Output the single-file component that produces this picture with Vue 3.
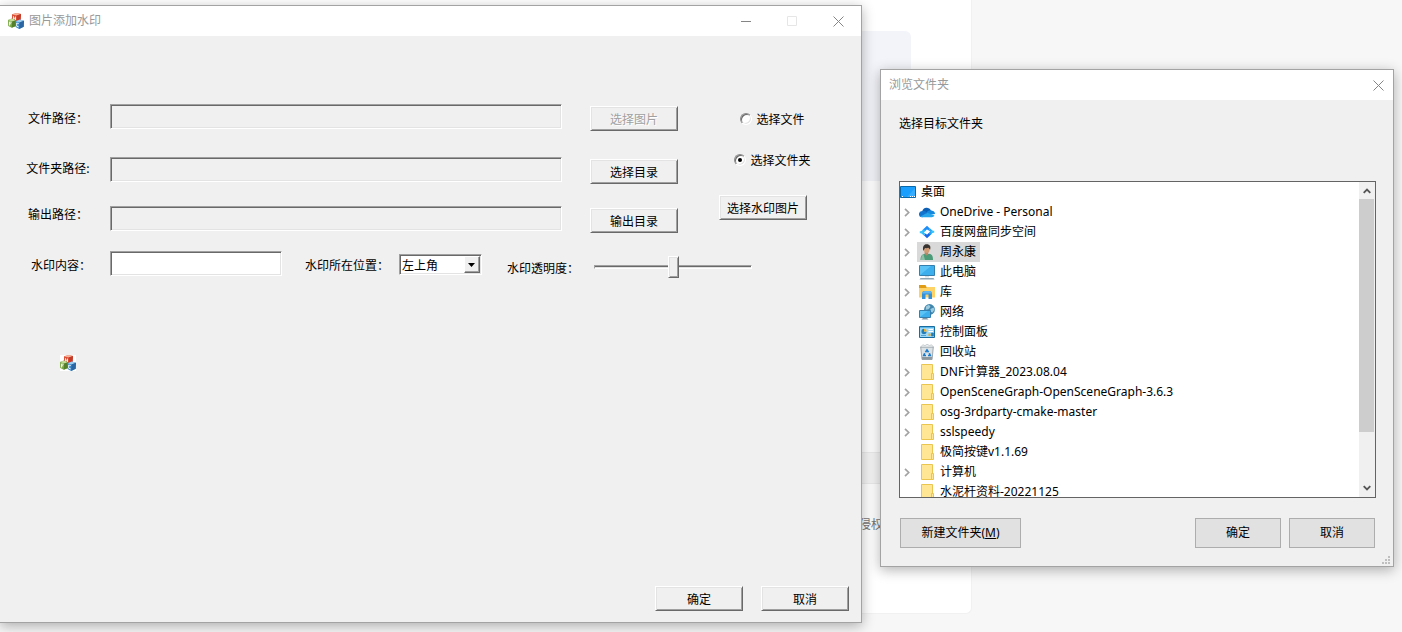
<script setup>
import { ref } from 'vue'

const filePath = ref('')
const folderPath = ref('')
const outputPath = ref('')
const content = ref('')
const mode = ref('folder')
const position = ref('左上角')
const opacity = ref(50)
const selected = ref('周永康')

const nodes = [
  { name: 'OneDrive - Personal', icon: 'cloud', open: true },
  { name: '百度网盘同步空间', icon: 'sync', open: true },
  { name: '周永康', icon: 'user', open: true },
  { name: '此电脑', icon: 'pc', open: true },
  { name: '库', icon: 'library', open: true },
  { name: '网络', icon: 'network', open: true },
  { name: '控制面板', icon: 'panel', open: true },
  { name: '回收站', icon: 'bin', open: false },
  { name: 'DNF计算器_2023.08.04', icon: 'folder', open: true },
  { name: 'OpenSceneGraph-OpenSceneGraph-3.6.3', icon: 'folder', open: true },
  { name: 'osg-3rdparty-cmake-master', icon: 'folder', open: true },
  { name: 'sslspeedy', icon: 'folder', open: true },
  { name: '极简按键v1.1.69', icon: 'folder', open: false },
  { name: '计算机', icon: 'folder', open: true },
  { name: '水泥杆资料-20221125', icon: 'folder', open: false }
]
</script>

<template>
  <div class="desktop">
    <svg class="defs" width="0" height="0" aria-hidden="true">
      <symbol id="mfc" viewBox="0 0 16 16">
        <path d="M4 1.300 9 0l4 1-.5 6.800-3.700 1.200L4 7.800z" fill="#dc5138" />
        <path d="M4 1.300 9 0l4 1-4.300 1.500z" fill="#f6b49c" />
        <path d="M8.700 2.500 13 1l-.5 6.800-3.700 1.200z" fill="#c23a28" />
        <path d="M5.500 3.200v3.600M7.500 3.600v3.600M5.500 5l2 .4" stroke="#fdeee9" stroke-width="1" fill="none" />
        <path d="M0 7 3.800 5.500 8 7.200l-.1 5.800-4.200 1.700L.2 13z" fill="#7dab48" />
        <path d="M0 7 3.800 5.500 8 7.200 4.100 8.500z" fill="#c3dc98" />
        <path d="M4.100 8.500 8 7.200l-.1 5.800-4.200 1.700z" fill="#54802b" />
        <path d="M1.500 12.500V8.900l2 .5M1.500 10.600l1.600.3" stroke="#f4f9ea" fill="none" />
        <path d="M7.500 8.200 12 6.600l4 1.200-.3 6-4.600 2.200-3.500-1.900z" fill="#3d8acb" />
        <path d="M7.500 8.200 12 6.600l4 1.200-4.500 1.600z" fill="#9dcdee" />
        <path d="M11.500 9.400 16 7.800l-.3 6-4.600 2.200z" fill="#2966a3" />
        <path d="M10.700 10.500l-2-.5v3.200l2 .7" stroke="#edf6fd" fill="none" />
      </symbol>
      <symbol id="close" viewBox="0 0 11 11">
        <path d="M.5.5l10 10M10.500.5l-10 10" stroke="#858585" fill="none" />
      </symbol>
      <symbol id="desk" viewBox="0 0 16 16">
        <path d="M.5 2.500h15v11H.5z" fill="#1a9fff" stroke="#0a68a8" />
        <path d="M7 13 15 4v9z" fill="#36adff" />
        <path d="M2 12.500h1M10 12.500h1M12 12.500h1M14 12.500h1" stroke="#fff" />
      </symbol>
      <symbol id="cloud" viewBox="0 0 16 16">
        <path d="M3.300 7.200A4.700 4.700 0 0 1 12 6.200L8 10.500z" fill="#0b5fb4" />
        <path d="M3 13.300A3.200 3.200 0 0 1 3.300 6.900C5 6.500 6.500 7.400 8 8.400L3.500 13.300z" fill="#1274cf" />
        <path d="M7.500 8.600c1.500-2.200 4-2.700 5.400-1.900A3.400 3.400 0 0 1 16 10L9 11z" fill="#1488dd" />
        <path d="M1.300 12.600 8.500 8.700 15.500 11.500a3 3 0 0 1-2.800 1.800H3.200a3 3 0 0 1-1.900-.7z" fill="#27a5ea" />
      </symbol>
      <symbol id="sync" viewBox="0 0 16 16">
        <path d="M4.600 6.700 8 3.500l2.200 2.100" fill="none" stroke="#1d8df8" stroke-width="2.600" />
        <path d="M11.400 9.300 8 12.500l-2.200-2.100" fill="none" stroke="#1668e8" stroke-width="2.600" />
        <path d="M5.500 5.800 3 8.200l2.600 2.400" fill="none" stroke="#2ebcfb" stroke-width="2.400" />
        <path d="M10.500 10.200 13 7.800l-2.600-2.400" fill="none" stroke="#24a6f6" stroke-width="2.400" />
        <path d="M.8 8.200h3M12.200 7.800h3" stroke="#39c5fb" stroke-width="2" />
      </symbol>
      <symbol id="user" viewBox="0 0 16 16">
        <path d="M1.500 16c0-4 1.500-6 4.500-6.300l2 .5 2-.5c3 .3 4 2.300 4 6.300z" fill="#4b9a78" />
        <path d="M2 16c.2-3 .9-4.800 2.500-5.700L6 16z" fill="#8bc0a6" />
        <path d="M5.500 7.500h3.800L9 10.500l-1.200 1-2-1.200z" fill="#b98663" />
        <ellipse cx="7.800" cy="5.500" rx="2.800" ry="3.500" fill="#d09c76" />
        <path d="M4.300 7C3.300 2.300 5 .4 7.500.3c3.300-.1 4.600 2.200 3.600 5.400L9.500 3.700C8 4.300 6.500 4.200 6 4z" fill="#383431" />
      </symbol>
      <symbol id="pc" viewBox="0 0 16 16">
        <path d="M.5 1.500h15v10H.5z" fill="#5cc3f7" stroke="#357fae" />
        <path d="M1 11 12 2h3v9z" fill="#3cafec" />
        <path d="M6 12h4v1.500H6z" fill="#d5e0e6" />
        <path d="M1.500 14h13l1 1.500H.5z" fill="#8ea6b4" />
      </symbol>
      <symbol id="library" viewBox="0 0 16 16">
        <path d="M0 1h6.500l1 2H15v3H0z" fill="#e09c14" />
        <path d="M0 4h7l1-1h8v10.500H0z" fill="#ffd267" />
        <path d="M3 15V9.500C3 8 4 7 5.500 7h5C12 7 13 8 13 9.500V15h-3.500v-4.500h-3V15z" fill="#3291db" />
        <path d="M3 9.500C3 8 4 7 5.500 7h5C12 7 13 8 13 9.500z" fill="#5fb4ee" />
      </symbol>
      <symbol id="network" viewBox="0 0 16 16">
        <circle cx="10.500" cy="5.500" r="5.400" fill="#3f86ad" />
        <path d="M7 2.500 10 .8l1.500 2-2 2.400-2.800.6zM11.500 5l3-1.500 1 2-2 3-2-.8z" fill="#9ccbe0" />
        <path d="M.5 6.500h11v7H.5z" fill="#5cc3f7" stroke="#357fae" />
        <path d="M1 13l8-6h2v6z" fill="#3cafec" />
        <path d="M4 14h4l1.500 1.500h-7z" fill="#8096a5" />
      </symbol>
      <symbol id="panel" viewBox="0 0 16 16">
        <path d="M.5 2.500h15v11H.5z" fill="#9bd8fa" stroke="#186c9f" />
        <path d="M1 3h14v1H1z" fill="#5cb8e9" />
        <circle cx="5" cy="7.500" r="2.700" fill="#fff" />
        <path d="M5 7.500h2.700A2.700 2.700 0 1 1 5 4.800z" fill="#237db8" />
        <path d="M5 7.500V4.800a2.700 2.700 0 0 1 2.700 2.700z" fill="#eaa91f" />
        <path d="M9.500 5.500H14M9.500 7.500H14" stroke="#fff" />
        <path d="M9.500 9.500h2v2.500h-2z" fill="#eaa91f" />
        <path d="M12.500 9h2v3h-2zM2 11.500h5" fill="#237db8" stroke="#237db8" stroke-width=".6" />
      </symbol>
      <symbol id="bin" viewBox="0 0 16 16">
        <path d="M1.700 3h12.600l-1.200 12.500H3z" fill="#dde2e5" stroke="#8d979e" stroke-width=".8" />
        <path d="M1.500 3 4 .7l2 1 2-1.400 2.600 1.200 2-.7L14.500 3z" fill="#eef1f2" stroke="#aab1b5" stroke-width=".6" />
        <path d="M3 13h10l-.2 2.500H3.200z" fill="#8d979e" />
        <path d="M6.500 8.200 8 5.900l1.500 2.300M10.300 9.200l1 2.300H9M7 11.500H4.700l1-2.300" fill="none" stroke="#1979cb" stroke-width="1.600" />
      </symbol>
      <symbol id="folder" viewBox="0 0 16 16">
        <path d="M2.500.5h11v15h-11z" fill="#ffe694" stroke="#eac54f" />
        <path d="M12.500 9.500h2v6h-2z" fill="#ffe694" stroke="#eac54f" />
      </symbol>
      <symbol id="chev" viewBox="0 0 6 9">
        <path d="M1 .8 4.700 4.500 1 8.200" fill="none" stroke="#a3a3a3" stroke-width="1.700" />
      </symbol>
      <symbol id="arrow" viewBox="0 0 8 6">
        <path d="M.7 4.800 4 1.500l3.300 3.300" fill="none" stroke="#555" stroke-width="1.800" />
      </symbol>
    </svg>

    <div class="page">
      <div class="banner"></div>
      <div class="strip"></div>
      <p class="note">侵权</p>
    </div>

    <section class="window main" aria-label="图片添加水印">
      <header class="titlebar">
        <svg class="icon"><use href="#mfc" /></svg>
        <h1>图片添加水印</h1>
        <button class="ctl" aria-label="最小化">
          <svg width="11" height="11"><path d="M0 5.500h10" stroke="#858585" /></svg>
        </button>
        <button class="ctl" aria-label="最大化" disabled>
          <svg width="11" height="11"><path d="M.5.5h9v9h-9z" fill="none" stroke="#e6e6e6" /></svg>
        </button>
        <button class="ctl" aria-label="关闭">
          <svg width="11" height="11"><use href="#close" /></svg>
        </button>
      </header>

      <form class="form" @submit.prevent>
        <div class="paths">
          <div class="col labels">
            <label for="file">文件路径：</label>
            <label for="folder-path">文件夹路径:</label>
            <label for="output">输出路径：</label>
          </div>
          <div class="col fields">
            <input id="file" v-model="filePath" class="box" type="text" readonly />
            <input id="folder-path" v-model="folderPath" class="box" type="text" readonly />
            <input id="output" v-model="outputPath" class="box" type="text" readonly />
          </div>
          <div class="col picks">
            <button class="btn" type="button" disabled>选择图片</button>
            <button class="btn" type="button">选择目录</button>
            <button class="btn" type="button">输出目录</button>
          </div>
          <div class="col options">
            <label class="radio"><input v-model="mode" type="radio" name="mode" value="file" />选择文件</label>
            <label class="radio"><input v-model="mode" type="radio" name="mode" value="folder" />选择文件夹</label>
            <button class="btn" type="button">选择水印图片</button>
          </div>
        </div>

        <div class="settings">
          <label for="content">水印内容：</label>
          <input id="content" v-model="content" class="box editable" type="text" />
          <label for="position">水印所在位置：</label>
          <div class="combo">
            <select id="position" v-model="position">
              <option>左上角</option>
              <option>右上角</option>
              <option>左下角</option>
              <option>右下角</option>
            </select>
            <span class="drop"><svg width="7" height="4"><path d="M0 0h7L3.500 4z" fill="#000" /></svg></span>
          </div>
          <div class="opacity">
            <label for="opacity">水印透明度：</label>
            <input id="opacity" v-model="opacity" type="range" min="0" max="100" />
          </div>
        </div>

        <div class="preview"><svg class="icon"><use href="#mfc" /></svg></div>

        <footer class="actions">
          <button class="btn" type="submit">确定</button>
          <button class="btn" type="button">取消</button>
        </footer>
      </form>
    </section>

    <section class="window dialog" role="dialog" aria-label="浏览文件夹">
      <header class="titlebar">
        <h2>浏览文件夹</h2>
        <button class="ctl narrow" aria-label="关闭">
          <svg width="11" height="11"><use href="#close" /></svg>
        </button>
      </header>
      <div class="content">
        <p class="prompt">选择目标文件夹</p>
        <div class="tree">
          <ul>
            <li class="root"><svg class="icon"><use href="#desk" /></svg>桌面</li>
            <li v-for="n in nodes" :key="n.name">
              <span class="toggle"><svg v-if="n.open" width="6" height="9"><use href="#chev" /></svg></span>
              <span class="node" :class="{ active: n.name === selected }" @click="selected = n.name">
                <svg class="icon"><use :href="'#' + n.icon" /></svg>{{ n.name }}
              </span>
            </li>
          </ul>
          <div class="scroll">
            <span class="step"><svg width="8" height="6"><use href="#arrow" /></svg></span>
            <div class="track"><div class="thumb"></div></div>
            <span class="step down"><svg width="8" height="6"><use href="#arrow" /></svg></span>
          </div>
        </div>
        <footer class="bar">
          <button class="flat wide">新建文件夹(<u>M</u>)</button>
          <button class="flat">确定</button>
          <button class="flat">取消</button>
        </footer>
      </div>
      <svg class="grip" width="8" height="8">
        <path d="M6 0h2v2H6zM3 3h2v2H3zM6 3h2v2H6zM0 6h2v2H0zM3 6h2v2H3zM6 6h2v2H6z" fill="#bfbfbf" />
      </svg>
    </section>
  </div>
</template>

<style>
body {
  background: #f7f7f7;
}
</style>

<style scoped>
.desktop {
  position: relative;
  min-height: 100vh;
  overflow: hidden;
  font: 12px/20px "Noto Sans", "Noto Sans CJK SC", sans-serif;
  color: #000;
}
.desktop *,
.desktop *::before {
  box-sizing: border-box;
}
.defs {
  position: absolute;
}
h1,
h2,
p,
ul {
  margin: 0;
  padding: 0;
  font-size: 12px;
  font-weight: 400;
}
button,
input,
select {
  margin: 0;
  padding: 0;
  font: inherit;
  color: inherit;
}
.icon {
  display: block;
  flex: none;
  width: 16px;
  height: 16px;
}

/* Web page behind the windows */
.page {
  position: absolute;
  inset: 0 430px 18px 0;
  background: #fff;
  border: 1px solid #f1f1f1;
  border-width: 0 1px 1px 0;
  border-radius: 0 0 6px 0;
}
.banner {
  height: 150px;
  margin: 31px 60px 0 0;
  background: #f3f4f9;
  border-radius: 6px;
}
.strip {
  height: 32px;
  margin-top: 271px;
  background: #f5f5f5;
  border: 1px solid #ececec;
  border-width: 1px 0;
}
.note {
  padding: 31px 88px 0 0;
  text-align: right;
  color: #777;
}

.window {
  position: absolute;
  display: flex;
  flex-direction: column;
  background: #f0f0f0;
  border: 1px solid #a3a3a3;
  box-shadow: 0 3px 12px rgba(0, 0, 0, 0.3);
}
.main {
  inset: 5px 540px 9px 0;
  border-left: 0;
}
.dialog {
  top: 69px;
  right: 8px;
  width: 514px;
}
.titlebar {
  display: flex;
  align-items: center;
  height: 30px;
  padding-left: 8px;
  background: #fff;
  color: #999;
}
.titlebar .icon {
  margin-right: 5px;
}
h1,
h2 {
  flex: 1;
}
.ctl {
  display: flex;
  align-items: center;
  justify-content: center;
  width: 46px;
  height: 29px;
  background: none;
  border: 0;
}
.narrow {
  width: 30px;
}

.form {
  display: flex;
  flex: 1;
  flex-direction: column;
  padding-top: 68px;
  font-family: "Noto Sans CJK SC", sans-serif;
}
.form label {
  white-space: nowrap;
}
.paths {
  display: flex;
  padding: 0 50px 0 24px;
}
.col {
  display: grid;
  align-content: start;
  align-items: start;
}
.labels {
  grid-template-rows: 50px 46px 20px;
  justify-items: center;
  width: 68px;
  margin-right: 18px;
  padding-top: 4px;
}
.fields {
  flex: 1;
  grid-template-rows: 53px 49px 25px;
}
.picks {
  grid-template-rows: 53px 49px 25px;
  margin: 0 41px 0 28px;
  padding-top: 2px;
}
.options {
  grid-template-rows: 41px 45px 25px;
  width: 92px;
  padding-top: 5px;
}
.box {
  width: 100%;
  height: 25px;
  background: #f0f0f0;
  border: 1px solid;
  border-color: #a0a0a0 #fff #fff #a0a0a0;
  border-radius: 0;
  box-shadow: inset 1px 1px #696969, inset -1px -1px #e3e3e3;
  padding: 0 4px;
  outline: 0;
}
.editable {
  background: #fff;
}
.btn {
  width: 88px;
  height: 25px;
  background: #f0f0f0;
  border: 1px solid;
  border-color: #fff #696969 #696969 #fff;
  border-radius: 0;
  box-shadow: inset 1px 1px #e3e3e3, inset -1px -1px #a0a0a0;
  white-space: nowrap;
}
.btn:disabled {
  color: #a0a0a0;
  text-shadow: 1px 1px #fff;
}
.radio {
  display: flex;
  align-items: center;
  justify-content: center;
  gap: 4px;
  padding-left: 15px;
}
.radio input {
  appearance: none;
  display: grid;
  place-items: center;
  width: 12px;
  height: 12px;
  background: #fff;
  border: 1px solid;
  border-color: #8a8a8a #fff #fff #8a8a8a;
  border-radius: 50%;
  box-shadow: inset 1px 1px #696969, inset -1px -1px #e3e3e3;
}
.radio input:checked::before {
  content: "";
  width: 4px;
  height: 4px;
  background: #000;
  border-radius: 50%;
}

.settings {
  display: flex;
  align-items: center;
  height: 27px;
  margin-top: 18px;
  padding: 0 109px 0 31px;
}
.settings .box {
  flex: 1;
  width: 0;
  min-width: 60px;
  align-self: flex-start;
  margin: 0 23px 0 19px;
}
.combo {
  position: relative;
  width: 83px;
  height: 21px;
  margin: 0 25px 0 10px;
}
.combo select {
  appearance: none;
  display: block;
  width: 100%;
  height: 21px;
  padding: 0 20px 0 2px;
  line-height: 18px;
  background: #fff;
  border: 1px solid;
  border-color: #a0a0a0 #fff #fff #a0a0a0;
  border-radius: 0;
  box-shadow: inset 1px 1px #696969, inset -1px -1px #e3e3e3;
}
.drop {
  position: absolute;
  top: 2px;
  right: 2px;
  display: grid;
  place-items: center;
  width: 16px;
  height: 17px;
  background: #f0f0f0;
  border: 1px solid;
  border-color: #fff #696969 #696969 #fff;
  box-shadow: inset -1px -1px #a0a0a0;
  pointer-events: none;
}
.opacity {
  display: flex;
  align-items: flex-end;
  align-self: flex-end;
  gap: 15px;
}
.opacity input {
  appearance: none;
  width: 158px;
  height: 22px;
  background: none;
}
.opacity input::-webkit-slider-runnable-track {
  height: 4px;
  background: linear-gradient(#696969 1px, #e3e3e3 1px);
  border: 1px solid;
  border-color: #a0a0a0 #fff #fff #a0a0a0;
}
.opacity input::-webkit-slider-thumb {
  appearance: none;
  width: 11px;
  height: 22px;
  margin-top: -10px;
  background: #f0f0f0;
  border: 1px solid;
  border-color: #fff #696969 #696969 #fff;
  box-shadow: inset 1px 1px #e3e3e3, inset -1px -1px #a0a0a0;
}
.preview {
  margin: 77px 0 0 60px;
}
.preview .icon {
  background: #fff;
}
.actions {
  display: flex;
  justify-content: flex-end;
  gap: 18px;
  margin-top: auto;
  padding: 0 12px 11px 0;
}

.content {
  padding: 14px 17px 18px 18px;
}
.tree {
  display: flex;
  height: 317px;
  margin-top: 47px;
  overflow: hidden;
  background: #fff;
  border: 1px solid #646464;
}
.tree ul {
  flex: 1;
  list-style: none;
}
.tree li {
  display: flex;
  height: 20px;
  white-space: nowrap;
}
.root,
.node {
  display: flex;
  align-items: center;
  gap: 5px;
}
.node {
  padding: 0 4px 0 2px;
}
.active {
  background: #d9d9d9;
}
.toggle {
  display: flex;
  align-items: center;
  width: 17px;
  padding-left: 4px;
}
.scroll {
  display: flex;
  flex-direction: column;
  width: 16px;
  background: #f0f0f0;
}
.step {
  display: grid;
  place-items: center;
  height: 17px;
}
.down {
  transform: rotate(180deg);
}
.track {
  flex: 1;
}
.thumb {
  width: 15px;
  height: 83%;
  background: #cdcdcd;
}
.bar {
  display: flex;
  gap: 8px;
  margin-top: 20px;
  padding: 0 1px;
}
.flat {
  width: 86px;
  height: 30px;
  background: #e1e1e1;
  border: 1px solid #adadad;
  border-radius: 0;
}
.wide {
  width: 121px;
  margin-right: auto;
}
.grip {
  position: absolute;
  right: 3px;
  bottom: 2px;
}
</style>
